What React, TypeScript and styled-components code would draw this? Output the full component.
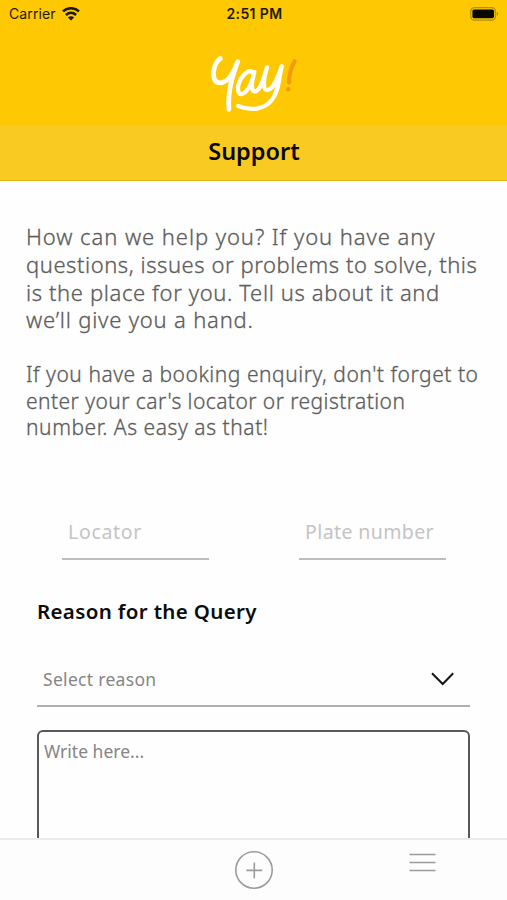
import React from "react";
import styled, { createGlobalStyle } from "styled-components";

const GlobalStyle = createGlobalStyle`
  * { box-sizing: border-box; }
  html, body { margin: 0; padding: 0; background: #fefefe; }
  body { font-family: "Noto Sans", "Open Sans", sans-serif; overflow: hidden; }
`;

const Screen = styled.div`
  display: flex;
  flex-direction: column;
  width: 507px;
  height: 900px;
  overflow: hidden;
  background: #fefefe;
`;

const Header = styled.header`
  flex: none;
  height: 126px;
  background: #fec802;
`;

const StatusBar = styled.div`
  display: grid;
  grid-template-columns: 1fr auto 1fr;
  align-items: center;
  height: 27px;
  padding: 0 7px 0 9px;
  font-family: Inter, "Liberation Sans", sans-serif;
  color: #1d1a05;
`;

const Carrier = styled.div`
  display: flex;
  align-items: center;
  gap: 6px;
  font-size: 14px;
  letter-spacing: 0.1px;
`;

const Clock = styled.div`
  font-size: 14px;
  font-weight: 600;
  letter-spacing: 0.4px;
`;

const BatterySlot = styled.div`
  display: flex;
  justify-content: flex-end;
`;

const LogoSlot = styled.div`
  display: flex;
  justify-content: center;
  padding: 23px 0 0 1px;
`;

const TitleBar = styled.div`
  flex: none;
  display: flex;
  align-items: center;
  justify-content: center;
  height: 55px;
  padding: 0 0 4px 1px;
  background: #f9cb22;
  border-bottom: 1px solid #e6b70f;
`;

const Title = styled.h1`
  margin: 0;
  font-size: 23.5px;
  font-weight: 600;
  line-height: 30px;
  color: #0b0a02;
`;

const Content = styled.main`
  flex: 1;
  min-height: 0;
  overflow: hidden;
  padding-top: 42px;
`;

const Paragraph = styled.p<{ $size: number; $leading: number; $gap?: number }>`
  margin: ${(p) => p.$gap ?? 0}px 0 0 26px;
  font-size: ${(p) => p.$size}px;
  line-height: ${(p) => p.$leading}px;
  font-weight: 300;
  color: #5c5c5c;
  -webkit-text-stroke: 0.3px #5c5c5c;
  white-space: nowrap;
`;

const Line = styled.span<{ $track: number }>`
  display: block;
  width: max-content;
  letter-spacing: ${(p) => p.$track}px;
`;

const FieldRow = styled.div`
  display: flex;
  gap: 90px;
  margin: 65px 0 0 62px;
`;

const Field = styled.div<{ $track: number }>`
  width: 147px;
  height: 54px;
  padding: 13px 0 0 6px;
  border-bottom: 2px solid #bdbdbd;
  font-size: 19.5px;
  line-height: 26px;
  letter-spacing: ${(p) => p.$track}px;
  color: #c4c4c4;
  white-space: nowrap;
`;

const SectionTitle = styled.h2`
  margin: 36px 0 0 37px;
  font-size: 20.5px;
  font-weight: 600;
  line-height: 30px;
  letter-spacing: 0.35px;
  color: #0c0c0c;
`;

const SelectRow = styled.div`
  display: flex;
  align-items: center;
  justify-content: space-between;
  width: 433px;
  height: 54px;
  margin: 27px 0 0 37px;
  padding: 0 16px 0 6px;
  border-bottom: 2px solid #b0b0b0;
  font-size: 17.5px;
  letter-spacing: 0.3px;
  color: #858585;
`;

const MessageBox = styled.div`
  width: 433px;
  height: 180px;
  margin: 23px 0 0 37px;
  padding: 7px 5px;
  border: 2px solid #585858;
  border-radius: 6px;
  font-size: 17.5px;
  line-height: 24px;
  color: #858585;
`;

const TabBar = styled.nav`
  flex: none;
  display: grid;
  grid-template-columns: repeat(3, 1fr);
  justify-items: center;
  height: 62px;
  border-top: 2px solid #ebebeb;
  background: #fdfdfd;
`;

const Tab = styled.div<{ $top: number }>`
  padding-top: ${(p) => p.$top}px;
`;

const WifiIcon = () => (
  <svg width="18" height="14" viewBox="0 0 18 14" fill="none" stroke="#1d1a05" strokeWidth="2.6">
    <path d="M1 4.4C5.6.2 12.4.2 17 4.4" />
    <path d="M3.9 8C7 5.2 11 5.2 14.1 8" />
    <path d="M9 13.5L5.9 10.4C7.6 8.8 10.4 8.8 12.1 10.4Z" fill="#1d1a05" stroke="none" />
  </svg>
);

const BatteryIcon = () => (
  <svg width="31" height="14" viewBox="0 0 31 14">
    <rect x="1.8" y="0.7" width="24.6" height="12.4" rx="3.6" fill="none" stroke="#b18f08" strokeWidth="1.3" />
    <rect x="3.4" y="2.4" width="21.6" height="8.8" rx="1.6" fill="#080701" />
    <path d="M27.8 4.5Q30.3 6.9 27.8 9.3Z" fill="#9d7f0d" />
  </svg>
);

const YayLogo = () => (
  <svg width="90" height="64" viewBox="0 0 90 64" fill="none" stroke="#fffef8" strokeLinecap="round" strokeLinejoin="round">
    <path strokeWidth="4.8" d="M11.3 8.6C5.5 12.5 2.6 24 5.8 29.8C8.5 35 17 33.5 22 25.5C24.8 21 27 16.5 28.7 11.7C23.5 26 18.5 41 19.9 59.3" />
    <path strokeWidth="4.3" d="M44 22.8C38.5 16.5 29 31 29 38.5C29 48.5 37.5 43.5 41.5 34.5C43.3 30.3 44.5 26 45.3 21.8C42.5 31.5 41.5 41.3 46 41.5C51.5 41 55 27.5 58 17.4C54.5 28.5 53.5 39.3 57.8 40C64.5 40.5 69 27 72.8 16.2C69.5 28 70.5 40 62.8 50C55.5 59.5 41.5 61.2 29.3 56" />
    <path stroke="#f39b0b" strokeWidth="4.2" d="M85.6 11.2C82.2 17 80.2 26 80 32.3" />
    <path stroke="#f39b0b" strokeWidth="4.4" d="M79.2 39.2h.1" />
  </svg>
);

const ChevronIcon = () => (
  <svg width="23" height="14" viewBox="0 0 23 14" fill="none" stroke="#171717" strokeWidth="2">
    <path d="M1 1.2L11.7 12L22.2 1.2" />
  </svg>
);

const PlusIcon = () => (
  <svg width="40" height="40" viewBox="0 0 40 40" fill="none" stroke="#9c9c9c" strokeWidth="1.6">
    <circle cx="20" cy="20" r="18.2" />
    <path d="M12.3 20.4H28.2M20.3 12.6V28.2" />
  </svg>
);

const MenuIcon = () => (
  <svg width="27" height="20" viewBox="0 0 27 20" stroke="#9c9c9c" strokeWidth="1.6">
    <path d="M0.5 1.5H26.5M0.5 9.5H26.5M0.5 17.5H26.5" />
  </svg>
);

export default function App() {
  return (
    <Screen>
      <GlobalStyle />
      <Header>
        <StatusBar>
          <Carrier>Carrier <WifiIcon /></Carrier>
          <Clock>2:51 PM</Clock>
          <BatterySlot><BatteryIcon /></BatterySlot>
        </StatusBar>
        <LogoSlot><YayLogo /></LogoSlot>
      </Header>
      <TitleBar><Title>Support</Title></TitleBar>
      <Content>
        <Paragraph $size={22} $leading={27.8}>
          <Line $track={0.93}>How can we help you? If you have any</Line>
          <Line $track={0.55}>questions, issues or problems to solve, this</Line>
          <Line $track={0.62}>is the place for you. Tell us about it and</Line>
          <Line $track={0.8}>we’ll give you a hand.</Line>
        </Paragraph>
        <Paragraph $size={21} $leading={26.5} $gap={27}>
          <Line $track={0.53}>If you have a booking enquiry, don't forget to</Line>
          <Line $track={0.43}>enter your car's locator or registration</Line>
          <Line $track={0.55}>number. As easy as that!</Line>
        </Paragraph>
        <FieldRow>
          <Field $track={0.7}>Locator</Field>
          <Field $track={0.4}>Plate number</Field>
        </FieldRow>
        <SectionTitle>Reason for the Query</SectionTitle>
        <SelectRow>Select reason <ChevronIcon /></SelectRow>
        <MessageBox>Write here...</MessageBox>
      </Content>
      <TabBar>
        <Tab $top={0} />
        <Tab $top={10}><PlusIcon /></Tab>
        <Tab $top={13}><MenuIcon /></Tab>
      </TabBar>
    </Screen>
  );
}
